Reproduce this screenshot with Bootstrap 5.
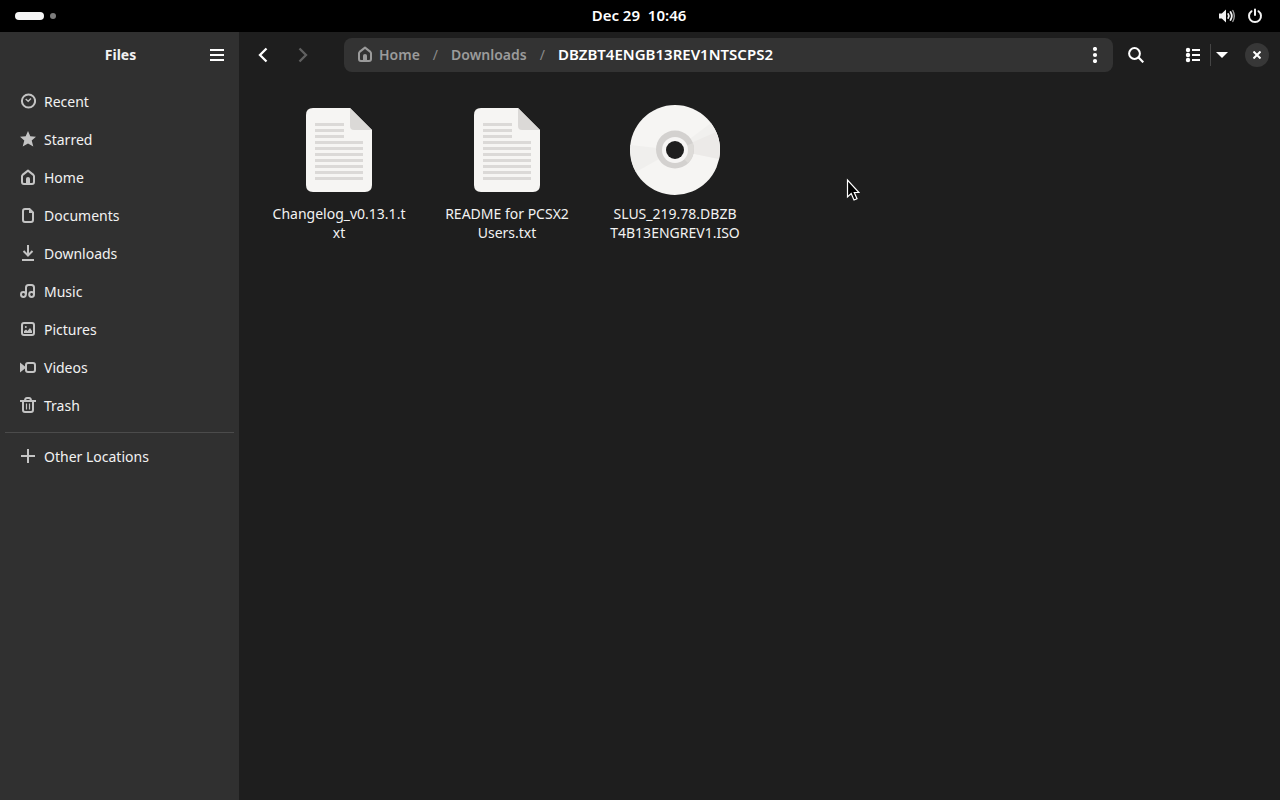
<!DOCTYPE html>
<html lang="en">
<head>
<meta charset="utf-8">
<meta name="viewport" content="width=device-width, initial-scale=1">
<title>Files</title>
<link href="https://cdn.jsdelivr.net/npm/bootstrap@5.3.0/dist/css/bootstrap.min.css" rel="stylesheet">
<style>
  body { font-family: "Noto Sans", "Open Sans", sans-serif; font-size: 14px; line-height: 19px; background: #1e1e1e; color: #f2f2f2; }
  svg { display: block; flex: none; }
  a { color: inherit; text-decoration: none; }
  .topbar { height: 32px; background: #000; display: grid; grid-template-columns: 1fr auto 1fr; padding: 0 17px 0 15px; }
  .bar-btn { background: none; border: 0; padding: 0; color: #fff; }
  .activities { gap: 6px; }
  .status { gap: 12px; }
  .pill { width: 29px; height: 8px; border-radius: 4px; background: #f6f6f6; }
  .dot { width: 6px; height: 6px; border-radius: 3px; background: #7c7c7c; }
  .clock { font-size: 15px; font-weight: 600; white-space: pre; padding-bottom: 2px; }
  .sidebar { width: 239px; background: #303030; flex: none; }
  .head { height: 46px; }
  .sidebar-head { display: grid; grid-template-columns: 34px 1fr 34px; padding: 0 5px 0 7px; }
  .app-title { grid-column: 2; padding-bottom: 2px; }
  .place { height: 38px; padding: 0 20px; gap: 8px; }
  .place svg { color: #c4c4c4; }
  .places { margin-top: 4px; }
  .rule { height: 1px; background: #4b4b4b; margin: 8px 5px 4px; }
  .tool { width: 34px; height: 34px; display: flex; align-items: center; justify-content: center; }
  .pathbar { height: 34px; background: #333; border-radius: 8px; margin: 0 6px 0 25px; padding: 0 1px 0 13px; color: #9b9b9b; font-weight: 600; min-width: 0; }
  .crumbs { list-style: none; margin: 0; padding: 0 0 2px; white-space: nowrap; gap: 13px; }
  .crumbs .slash { font-weight: 400; color: #8a8a8a; }
  .crumbs .here { color: #fff; font-size: 15px; }
  .view-btn { margin-left: 23px; }
  .split { width: 1px; height: 22px; background: #454545; }
  .caret { width: 22px; }
  .round { width: 24px; height: 24px; border-radius: 50%; background: #373737; margin: 0 11px 0 12px; }
  .files { padding: 24px 16px; gap: 24px 0; }
  .file { width: 168px; text-align: center; }
  .file svg { margin: 0 auto 6px; }
  .pointer { position: absolute; left: 846px; top: 178px; }
</style>
</head>
<body class="d-flex flex-column min-vh-100">
<header class="topbar align-items-center">
  <button class="bar-btn activities d-flex align-items-center" aria-label="Activities"><span class="pill"></span><span class="dot"></span></button>
  <button class="bar-btn clock">Dec 29  10:46</button>
  <button class="bar-btn status d-flex justify-content-end" aria-label="System menu">
    <svg width="16" height="16" viewBox="0 0 16 16" fill="none" stroke="#f2f2f2" stroke-width="2" stroke-linecap="round"><path d="M0 5.400h2.800L7 1.500v13l-4.200-4H0z" fill="#f2f2f2" stroke="none"/><path d="M9.200 6q1.400 2 0 4" stroke-width="1.800"/><path d="M11.500 4q2.600 4 0 8" stroke-width="1.800"/><path d="M13.800 2.500q3 5.500 0 11" stroke="#999" stroke-width="1.400"/></svg>
    <svg width="16" height="16" viewBox="0 0 16 16" fill="none" stroke="#f2f2f2" stroke-width="2" stroke-linecap="round"><path d="M8 1.500V7M4.500 3.200a6 6 0 1 0 7 0"/></svg>
  </button>
</header>
<div class="d-flex flex-grow-1">
  <aside class="sidebar">
    <div class="head sidebar-head align-items-center">
      <strong class="app-title text-center">Files</strong>
      <button class="bar-btn tool" aria-label="Main menu"><svg width="14" height="12" viewBox="0 0 14 12" fill="#fff"><path d="M0 0h14v2H0zM0 5h14v2H0zM0 10h14v2H0z"/></svg></button>
    </div>
    <nav class="places" aria-label="Places">
      <a href="#" class="place d-flex align-items-center"><svg width="16" height="16" viewBox="0 0 16 16" fill="none" stroke="currentColor" stroke-width="2"><circle cx="8.500" cy="8" r="6.600"/><path d="M5.700 6l2.500 2.300L11 5.500" stroke-width="1.400"/></svg>Recent</a>
      <a href="#" class="place d-flex align-items-center"><svg width="16" height="16" viewBox="0 0 16 16" fill="currentColor"><path d="M8 0l2.300 5.200 5.700.6-4.300 3.800 1.600 6L8 12.600l-5.300 3 1.600-6L0 5.800l5.700-.6z"/></svg>Starred</a>
      <a href="#" class="place d-flex align-items-center"><svg width="16" height="16" viewBox="0 0 16 16" fill="none" stroke="currentColor" stroke-width="2"><path d="M2 7.200q0-.8.600-1.300L8 1.600l5.400 4.300q.600.500.600 1.300V13q0 2-2 2H4q-2 0-2-2z" stroke-linejoin="round"/><path d="M6 15V9.500Q6 8 8 8t2 1.500V15z" fill="currentColor" stroke="none"/></svg>Home</a>
      <a href="#" class="place d-flex align-items-center"><svg width="16" height="16" viewBox="0 0 16 16" fill="none" stroke="currentColor" stroke-width="2"><path d="M5 2h4.500L13 5.500V13q0 2-2 2H5q-2 0-2-2V4q0-2 2-2z"/><path d="M9 2v4h4.500z" fill="currentColor" stroke="none"/></svg>Documents</a>
      <a href="#" class="place d-flex align-items-center"><svg width="16" height="16" viewBox="0 0 16 16" fill="none" stroke="currentColor" stroke-width="2"><path d="M8 0v10M3.500 6L8 10.500 12.500 6M2 15h12"/></svg>Downloads</a>
      <a href="#" class="place d-flex align-items-center"><svg width="16" height="16" viewBox="0 0 16 16" fill="none" stroke="currentColor" stroke-width="2"><circle cx="3.400" cy="11.500" r="2.400"/><circle cx="11.600" cy="11.500" r="2.400"/><path d="M6 11.500V4.500Q6 2 8.500 2h3Q14 2 14 4.500v7"/></svg>Music</a>
      <a href="#" class="place d-flex align-items-center"><svg width="16" height="16" viewBox="0 0 16 16" fill="none" stroke="currentColor" stroke-width="2"><rect x="2" y="2" width="12" height="12" rx="2"/><path d="M4 12V10l2-1.500L7.500 10 10 7l2 3v2z" fill="currentColor" stroke="none"/><circle cx="5.800" cy="6" r="1" fill="currentColor" stroke="none"/></svg>Pictures</a>
      <a href="#" class="place d-flex align-items-center"><svg width="16" height="16" viewBox="0 0 16 16" fill="none" stroke="currentColor" stroke-width="2"><rect x="6" y="4" width="9" height="9" rx="2"/><path d="M0 3.500l5 4v2l-5 4z" fill="currentColor" stroke="none"/></svg>Videos</a>
      <a href="#" class="place d-flex align-items-center"><svg width="16" height="16" viewBox="0 0 16 16" fill="none" stroke="currentColor" stroke-width="2"><path d="M0 4h16M5 4q0-3 2-3h2q2 0 2 3M3 4v9q0 2 2 2h6q2 0 2-2V4"/><path d="M6.500 6.500v6M9.500 6.500v6" stroke-width="1.200"/></svg>Trash</a>
      <div class="rule"></div>
      <a href="#" class="place d-flex align-items-center"><svg width="16" height="16" viewBox="0 0 16 16" fill="none" stroke="currentColor" stroke-width="2"><path d="M8 1v14M1 8h14"/></svg>Other Locations</a>
    </nav>
  </aside>
  <main class="flex-grow-1" style="min-width:0">
    <div class="head d-flex align-items-center">
      <button class="bar-btn tool ms-2" aria-label="Back"><svg width="16" height="16" viewBox="0 0 16 16" fill="none" stroke="#fff" stroke-width="2.300"><path d="M10.500 1.500L4 8l6.500 6.500"/></svg></button>
      <button class="bar-btn tool ms-1" aria-label="Forward"><svg width="16" height="16" viewBox="0 0 16 16" fill="none" stroke="#606060" stroke-width="2.300"><path d="M5.500 1.500L12 8l-6.500 6.500"/></svg></button>
      <nav class="pathbar d-flex align-items-center flex-grow-1" aria-label="Location">
        <ol class="crumbs d-flex flex-grow-1">
          <li><a href="#" class="d-flex align-items-center" style="gap:6px"><svg width="16" height="16" viewBox="0 0 16 16" fill="none" stroke="currentColor" stroke-width="2"><path d="M2 7.200q0-.8.600-1.300L8 1.600l5.400 4.300q.600.500.600 1.300V13q0 2-2 2H4q-2 0-2-2z" stroke-linejoin="round"/><path d="M6 15V9.500Q6 8 8 8t2 1.500V15z" fill="currentColor" stroke="none"/></svg>Home</a></li>
          <li class="slash">/</li>
          <li><a href="#">Downloads</a></li>
          <li class="slash">/</li>
          <li><a href="#" class="here" aria-current="page">DBZBT4ENGB13REV1NTSCPS2</a></li>
        </ol>
        <button class="bar-btn tool" aria-label="Folder menu"><svg width="16" height="16" viewBox="0 0 16 16" fill="#fff"><circle cx="8" cy="2" r="2.100"/><circle cx="8" cy="8" r="2.100"/><circle cx="8" cy="14" r="2.100"/></svg></button>
      </nav>
      <button class="bar-btn tool" aria-label="Search"><svg width="16" height="16" viewBox="0 0 16 16" fill="none" stroke="#fff" stroke-width="2"><circle cx="6.500" cy="6.500" r="5.400"/><path d="M10.300 10.300l5 5" stroke-width="2.200"/></svg></button>
      <button class="bar-btn tool view-btn" aria-label="List view"><svg width="16" height="16" viewBox="0 0 16 16" fill="#fff"><path d="M7 2h8v2H7zM7 7h8v2H7zM7 12h8v2H7z"/><circle cx="3" cy="3" r="2.200"/><circle cx="3" cy="8" r="2.200"/><circle cx="3" cy="13" r="2.200"/></svg></button>
      <span class="split"></span>
      <button class="bar-btn tool caret" aria-label="View options"><svg width="12" height="6" viewBox="0 0 12 6" fill="#fff"><path d="M0 0h12L6 6z"/></svg></button>
      <button class="bar-btn tool round" aria-label="Close"><svg width="8" height="8" viewBox="0 0 8 8" fill="none" stroke="#fff" stroke-width="2"><path d="M.5.5l7 7M7.500.5l-7 7"/></svg></button>
    </div>
    <div class="files d-flex flex-wrap">
      <a href="#" class="file"><svg width="96" height="96" viewBox="0 0 96 96"><use href="#sheet"/></svg>Changelog_v0.13.1.t<br>xt</a>
      <a href="#" class="file"><svg width="96" height="96" viewBox="0 0 96 96"><use href="#sheet"/></svg>README for PCSX2<br>Users.txt</a>
      <a href="#" class="file"><svg width="96" height="96" viewBox="0 0 96 96"><circle cx="48" cy="48" r="45" fill="#f6f5f3"/><path d="M48 48L3.500 43A45 45 0 0 0 9 70z" fill="#f0efed"/><path d="M48 48L84 21a45 45 0 0 1 8 36z" fill="#f1f0ee"/><path d="M48 48L89 30a45 45 0 0 1 3 27z" fill="#eceae8"/><circle cx="48" cy="47.500" r="19" fill="#d3d1cf"/><path d="M48 48l18-7a19 19 0 0 1-5 20z" fill="#dddbd8"/><circle cx="48" cy="48" r="13" fill="#f6f5f4"/><circle cx="48" cy="48" r="9" fill="#1e1e1e"/></svg>SLUS_219.78.DBZB<br>T4B13ENGREV1.ISO</a>
    </div>
  </main>
</div>
<svg width="0" height="0" class="position-absolute" aria-hidden="true"><defs><g id="sheet"><path d="M22 6h37l22 22v55q0 7-7 7H22q-7 0-7-7V13q0-7 7-7z" fill="#f6f5f3"/><path d="M59 6l22 22H63q-4 0-4-4z" fill="#dbd9d7"/><path d="M24 22.500h29M24 28.500h29M24 34.500h29M24 40.500h48M24 46.500h48M24 52.500h48M24 58.500h48M24 64.500h48M24 70.500h48M24 76.500h48" stroke="#dbd9d7" stroke-width="3"/></g></defs></svg>
<svg class="pointer" width="14" height="24" viewBox="0 0 14 24" aria-hidden="true"><path d="M1.500 2v17l3.700-3.400L8 22l3-1.300-2.700-6.200H13z" fill="#000" stroke="#fff" stroke-width="1.200"/></svg>
<script src="https://cdn.jsdelivr.net/npm/bootstrap@5.3.0/dist/js/bootstrap.bundle.min.js"></script>
</body>
</html>
